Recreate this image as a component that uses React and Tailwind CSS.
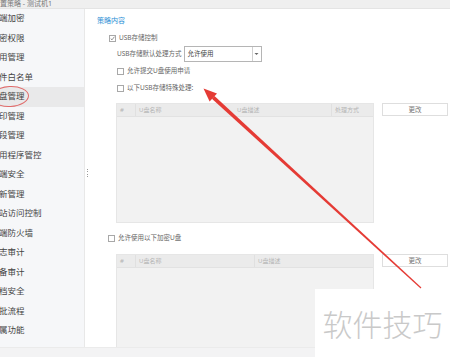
import React from "react";

const MENU = ["端加密","密权限","用管理","件白名单","盘管理","印管理","段管理","用程序管控","端安全","新管理","站访问控制","端防火墙","志审计","备审计","档安全","批流程","属功能"];

const FONT = { fontFamily: '"Noto Sans", "Noto Sans CJK SC", sans-serif' };

function Box({ checked }) {
  return (
    <span className="w-[7px] h-[7px] border border-[#a8a8a8] bg-white flex items-center justify-center flex-shrink-0">
      {checked && (
        <svg width="7" height="7" viewBox="0 0 7 7"><path d="M1 3.6 L2.8 5.4 L6.2 1" fill="none" stroke="#555" strokeWidth="0.9"/></svg>
      )}
    </span>
  );
}

function Check({ checked, label, className }) {
  return (
    <div className={`flex items-center gap-[3px] h-[10px] ${className}`}>
      <Box checked={checked}/>
      <span className="text-[6.5px] leading-[10px] text-[#666]">{label}</span>
    </div>
  );
}

function Table({ cols, height }) {
  return (
    <div className="flex gap-[8px] ml-[19px]">
      <div className="w-[258px] bg-[#f2f2f2] border border-[#e6e6e6]" style={{ height }}>
        <div className="flex h-[13px] bg-[#ebebeb] border-b border-[#e2e2e2]">
          {cols.map((c, i) => (
            <div key={i} className={`${c.w} h-full flex items-center pl-[3px] text-[6px] text-[#b5b5b5] ${i > 0 && c.line ? "border-l border-[#e0e0e0]" : ""}`}>{c.t}</div>
          ))}
        </div>
      </div>
      <div className="w-[66px] h-[13px] bg-white border border-[#dedede] flex items-center justify-center text-[6.5px] text-[#777]">更改</div>
    </div>
  );
}

export default function App() {
  return (
    <div className="relative w-[450px] h-[357px] overflow-hidden bg-white flex flex-col" style={FONT}>
      <div className="h-[9px] bg-[#efefef] border-b border-[#e4e4e4] overflow-hidden flex-shrink-0">
        <div className="-mt-[1px] text-[7px] leading-[9px] text-[#777]">置策略 - 测试机1</div>
      </div>

      <div className="flex flex-1 min-h-0">
        <div className="relative w-[85px] bg-[#f6f7f9] border-r border-[#e8e8e8] flex-shrink-0">
          {MENU.map((m, i) => (
            <div key={m} className={`h-[19.5px] flex items-center -ml-[1px] text-[8.5px] text-[#444] ${i === 4 ? "bg-[#e9e9ea]" : ""}`}>{m}</div>
          ))}
          <div className="absolute left-[-9px] top-[77px] w-[38px] h-[21px] rounded-[50%] border border-[#e06a6a] -rotate-3"></div>
        </div>

        <div className="w-[12px] flex items-center justify-start pl-[2px]">
          <div className="flex flex-col gap-[1.5px] -mt-[10px]">
            {[0,1,2,3].map(i => <span key={i} className="w-[1px] h-[1px] bg-[#9a9a9a]"/>)}
          </div>
        </div>

        <div className="flex-1 flex flex-col">
          <div className="mt-[7px] h-[10px] leading-[10px] text-[7px] text-[#2d8fd5]">策略内容</div>
          <Check checked label="USB存储控制" className="mt-[7px] ml-[12px]"/>
          <div className="mt-[3px] ml-[20px] h-[16px] flex items-center gap-[2px]">
            <span className="text-[6.5px] text-[#666]">USB存储默认处理方式</span>
            <div className="w-[78px] h-[16px] border border-[#b5b5b5] bg-white flex">
              <span className="flex-1 pl-[3px] text-[6.5px] leading-[14px] text-[#444]">允许使用</span>
              <span className="w-[9px] border-l border-[#d0d0d0] flex items-center justify-center">
                <svg width="5" height="4" viewBox="0 0 5 4"><path d="M0.5 1 L2.5 3 L4.5 1Z" fill="#666"/></svg>
              </span>
            </div>
          </div>
          <Check label="允许提交U盘使用申请" className="mt-[4px] ml-[20px]"/>
          <Check label="以下USB存储特殊处理:" className="mt-[7px] ml-[20px]"/>
          <div className="mt-[10px]">
            <Table height={120} cols={[{ t: "#", w: "w-[18px]" }, { t: "U盘名称", w: "w-[99px]", line: true }, { t: "U盘描述", w: "w-[97px]" }, { t: "处理方式", w: "flex-1", line: true }]}/>
          </div>
          <Check label="允许使用以下加密U盘" className="mt-[10px] ml-[11px]"/>
          <div className="mt-[11px]">
            <Table height={100} cols={[{ t: "#", w: "w-[18px]" }, { t: "U盘名称", w: "w-[119px]", line: true }, { t: "U盘描述", w: "flex-1", line: true }]}/>
          </div>
        </div>
      </div>

      <div className="h-[10px] bg-[#f3f3f4] border-t border-[#ebebeb] flex-shrink-0 z-10"></div>

      <svg className="absolute inset-0 pointer-events-none" width="450" height="357" viewBox="0 0 450 357">
        <polygon points="211.9,98.8 214.5,96.1 421.4,287.6 420.6,288.4" fill="#e53b35"/>
        <polygon points="203.5,88.5 209.6,101.6 217.0,93.5" fill="#e53b35"/>
      </svg>

      <div className="absolute left-[315px] top-[289px] w-[135px] h-[68px] bg-white z-20 flex items-center justify-center">
        <span className="text-[30px] text-[#c9c9c9] font-light" style={{ fontFamily: '"Noto Sans CJK SC", sans-serif' }}>软件技巧</span>
      </div>
    </div>
  );
}
